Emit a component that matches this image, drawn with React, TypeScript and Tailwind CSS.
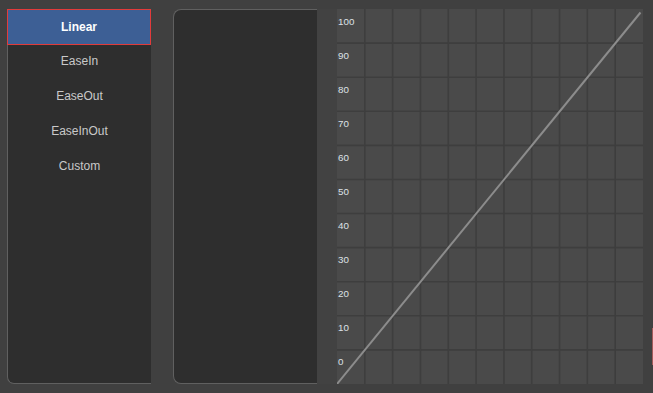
import React from "react";

const items = ["Linear", "EaseIn", "EaseOut", "EaseInOut", "Custom"];

const W = 306;
const H = 375;
const rows = 11;
const cols = 11;

function Chart() {
  const rowH = H / rows;
  const colW = W / cols;
  return (
    <div className="flex h-full">
      <div className="w-[20px] h-full bg-[#424242]" />
      <svg width={W} height={H} className="block">
        <rect x={0} y={0} width={W} height={H} fill="#4a4a4a" />
        {Array.from({ length: rows - 1 }, (_, i) => (
          <line key={"h" + i} x1={0} x2={W} y1={(i + 1) * rowH} y2={(i + 1) * rowH} stroke="#3e3e3e" strokeWidth={1.6} />
        ))}
        {Array.from({ length: cols - 1 }, (_, i) => (
          <line key={"v" + i} y1={0} y2={H} x1={(i + 1) * colW} x2={(i + 1) * colW} stroke="#3e3e3e" strokeWidth={1.6} />
        ))}
        {Array.from({ length: rows }, (_, i) => (
          <text
            key={"t" + i}
            x={1}
            y={i * rowH + 15.5}
            fill="#dde1e6"
            fontSize={9.8}
            fontFamily="'Liberation Sans', Arial, sans-serif"
          >
            {100 - i * 10}
          </text>
        ))}
        <line x1={0} y1={H} x2={303.5} y2={3.5} stroke="#8c8c8c" strokeWidth={2} />
      </svg>
    </div>
  );
}

export default function App() {
  return (
    <div className="relative w-[653px] h-[393px] bg-[#404040] overflow-hidden font-['Liberation_Sans',Arial,sans-serif]">
      <div className="flex pt-[9px] pl-[7px] h-[384px]">
        {/* easing list */}
        <div className="w-[144px] h-full bg-[#2e2e2e] border-l border-b border-[#606060] rounded-bl-[7px] flex flex-col">
          <div className="h-[36px] -ml-px bg-[#3d5f95] border border-[#e23b3b] flex items-center justify-center text-white text-[12px] font-bold">
            {items[0]}
          </div>
          <div className="-mt-[2px] flex flex-col">
            {items.slice(1).map((it) => (
              <div key={it} className="h-[35px] flex items-center justify-center text-[12px] text-[#c9c9c9]">
                {it}
              </div>
            ))}
          </div>
        </div>

        {/* preview panel */}
        <div className="ml-[22px] w-[144px] h-full bg-[#2e2e2e] border-l border-t border-b border-[#606060] rounded-l-[8px]" />

        {/* curve */}
        <Chart />
      </div>
      <div className="absolute right-0 top-[328px] w-px h-[37px] bg-[#a35a5a]" />
    </div>
  );
}
